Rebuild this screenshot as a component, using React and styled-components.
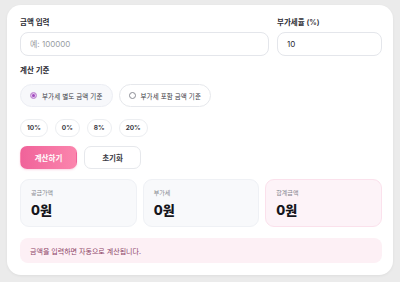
import React, { useState } from 'react'
import styled, { createGlobalStyle } from 'styled-components'

const GlobalStyle = createGlobalStyle`
  html, body {
    margin: 0;
    padding: 0;
    background: #ebebeb;
    font-family: "Inter", "Noto Sans CJK KR", sans-serif;
  }
  * { box-sizing: border-box; }
`

const Page = styled.div`
  padding: 5px 7px 7px 7px;
`

const Card = styled.div`
  background: #fff;
  border-radius: 14px;
  padding: 13px 11px 12px 13px;
  height: 270px;
  box-shadow: 0 1px 3px rgba(0, 0, 0, 0.06);
`

const TopRow = styled.div`
  display: grid;
  grid-template-columns: 1fr 105px;
  gap: 8px;
`

const Field = styled.div`
  display: flex;
  flex-direction: column;
`

const Label = styled.div`
  font-size: 7.5px;
  font-weight: 600;
  color: #2b2b33;
  line-height: 10px;
  height: 10px;
  margin-bottom: ${p => p.$mb || 4}px;
`

const Input = styled.input`
  height: 24px;
  border: 1px solid #e4e6eb;
  border-radius: 8px;
  padding: 0 9px;
  font-family: inherit;
  font-size: 8px;
  color: #2b2b33;
  outline: none;
  &::placeholder { color: #9a9ca3; }
`

const Section = styled.div`
  margin-top: ${p => p.$mt}px;
`

const Row = styled.div`
  display: flex;
  gap: ${p => p.$gap}px;
`

const Pill = styled.div`
  display: flex;
  align-items: center;
  gap: 5px;
  height: 23px;
  padding: 0 9px;
  border-radius: 12px;
  border: 1px solid ${p => (p.$active ? '#eceef4' : '#e6e8ec')};
  background: ${p => (p.$active ? '#f7f8fb' : '#fff')};
  font-size: 6.5px;
  letter-spacing: 0.1px;
  color: #3a3a44;
  cursor: pointer;
`

const Dot = styled.span`
  width: 7px;
  height: 7px;
  border-radius: 50%;
  border: 1px solid ${p => (p.$on ? '#c99bd8' : '#8a8c93')};
  background: ${p => (p.$on ? '#a04bbf' : '#fff')};
  box-shadow: ${p => (p.$on ? 'inset 0 0 0 1px #e6c9ee' : 'none')};
`

const Chip = styled.div`
  display: flex;
  align-items: center;
  justify-content: center;
  height: 18px;
  padding: 0 6px;
  min-width: 22px;
  border-radius: 9px;
  border: 1px solid #eceef1;
  background: #fff;
  font-size: 6.5px;
  font-weight: 700;
  color: #3a3a44;
  cursor: pointer;
`

const Button = styled.button`
  height: 23px;
  width: ${p => p.$w}px;
  border-radius: 7px;
  font-family: inherit;
  font-size: 7.5px;
  font-weight: 700;
  cursor: pointer;
  border: 1px solid ${p => (p.$primary ? 'transparent' : '#e6e8ec')};
  color: ${p => (p.$primary ? '#fff' : '#3a3a44')};
  background: ${p => (p.$primary ? 'linear-gradient(90deg, #f0639a, #fb85ad)' : '#fff')};
  box-shadow: ${p => (p.$primary ? '0 1px 2px rgba(240, 99, 154, 0.25)' : 'none')};
`

const Results = styled.div`
  display: grid;
  grid-template-columns: repeat(3, 1fr);
  gap: 6px;
`

const ResultCard = styled.div`
  height: 48px;
  border-radius: 9px;
  padding: 9px 10px;
  border: 1px solid ${p => (p.$pink ? '#fbe1ec' : '#eff1f5')};
  background: ${p => (p.$pink ? '#fdf3f8' : '#f8f9fb')};
`

const ResultLabel = styled.div`
  font-size: 6px;
  color: #85878e;
  line-height: 8px;
`

const ResultValue = styled.div`
  margin-top: 5px;
  font-size: 13px;
  font-weight: 800;
  color: #16161c;
  line-height: 16px;
`

const Notice = styled.div`
  height: 25px;
  border-radius: 8px;
  background: #fdf0f5;
  display: flex;
  align-items: center;
  padding: 0 10px;
  font-size: 7px;
  color: #8c4266;
`

const App = () => {
  const [mode, setMode] = useState('excl')
  const [amount, setAmount] = useState('')
  const [rate, setRate] = useState('10')

  return (
    <>
      <GlobalStyle />
      <Page>
        <Card>
          <TopRow>
            <Field>
              <Label>금액 입력</Label>
              <Input placeholder="예: 100000" value={amount} onChange={e => setAmount(e.target.value)} />
            </Field>
            <Field>
              <Label>부가세율 (%)</Label>
              <Input value={rate} onChange={e => setRate(e.target.value)} />
            </Field>
          </TopRow>

          <Section $mt={10}>
            <Label $mb={8}>계산 기준</Label>
            <Row $gap={6}>
              <Pill $active={mode === 'excl'} onClick={() => setMode('excl')}>
                <Dot $on={mode === 'excl'} />
                부가세 별도 금액 기준
              </Pill>
              <Pill $active={mode === 'incl'} onClick={() => setMode('incl')}>
                <Dot $on={mode === 'incl'} />
                부가세 포함 금액 기준
              </Pill>
            </Row>
          </Section>

          <Section $mt={12}>
            <Row $gap={7}>
              {['10%', '0%', '8%', '20%'].map(r => (
                <Chip key={r} onClick={() => setRate(r.replace('%', ''))}>{r}</Chip>
              ))}
            </Row>
          </Section>

          <Section $mt={9}>
            <Row $gap={7}>
              <Button $primary $w={57}>계산하기</Button>
              <Button $w={57} onClick={() => setAmount('')}>초기화</Button>
            </Row>
          </Section>

          <Section $mt={10}>
            <Results>
              <ResultCard>
                <ResultLabel>공급가액</ResultLabel>
                <ResultValue>0원</ResultValue>
              </ResultCard>
              <ResultCard>
                <ResultLabel>부가세</ResultLabel>
                <ResultValue>0원</ResultValue>
              </ResultCard>
              <ResultCard $pink>
                <ResultLabel>합계금액</ResultLabel>
                <ResultValue>0원</ResultValue>
              </ResultCard>
            </Results>
          </Section>

          <Section $mt={11}>
            <Notice>금액을 입력하면 자동으로 계산됩니다.</Notice>
          </Section>
        </Card>
      </Page>
    </>
  )
}

export default App
